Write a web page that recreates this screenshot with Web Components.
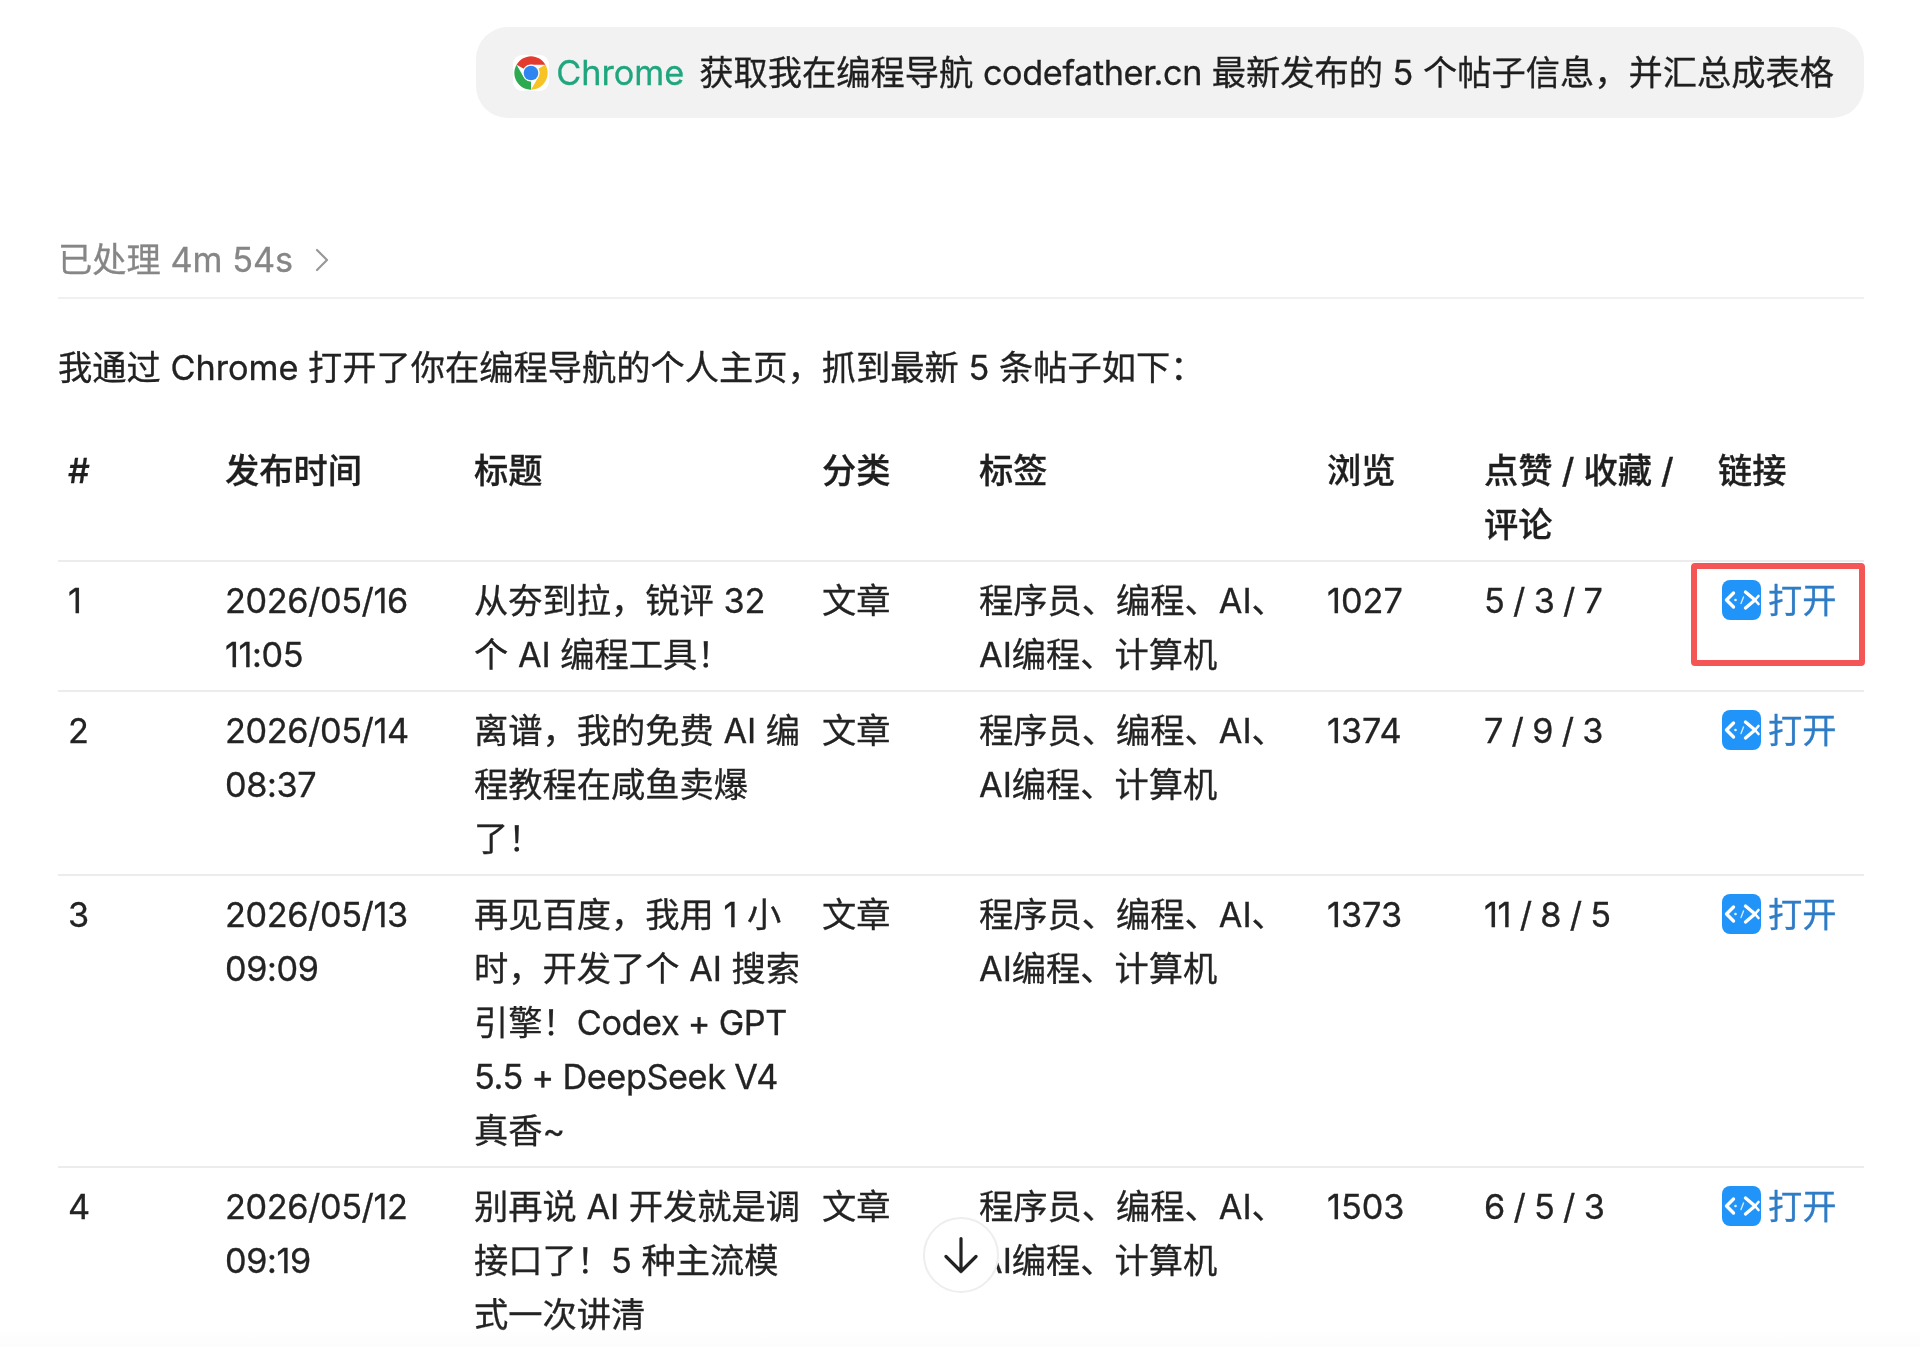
<!DOCTYPE html>
<html lang="zh-CN">
<head>
<meta charset="utf-8">
<title>Chat</title>
<style>
html,body{margin:0;padding:0;background:#fff}
body{font-family:Inter,"Noto Sans CJK SC",sans-serif;font-size:34.25px;line-height:54px;color:#232323;-webkit-text-stroke:.3px currentColor}
</style>
</head>
<body>
<chat-page>
  <user-bubble><app-logo slot="app-logo"></app-logo><span slot="app">Chrome</span>获取我在编程导航 <latin-run>codefather.cn</latin-run> 最新发布的 5 个帖子信息，并汇总成表格</user-bubble>
  <work-status>已处理 4m 54s</work-status>
  <intro-text>我通过 Chrome 打开了你在编程导航的个人主页，抓到最新 5 条帖子如下：</intro-text>
  <post-table>
    <post-row head>
      <post-cell>#</post-cell><post-cell>发布时间</post-cell><post-cell>标题</post-cell><post-cell>分类</post-cell><post-cell>标签</post-cell><post-cell>浏览</post-cell><post-cell>点赞 / 收藏 /<br>评论</post-cell><post-cell>链接</post-cell>
    </post-row>
    <post-row>
      <post-cell>1</post-cell><post-cell><latin-run>2026/05/16<br>11:05</latin-run></post-cell><post-cell>从夯到拉，锐评 32<br>个 AI 编程工具！</post-cell><post-cell>文章</post-cell><post-cell>程序员、编程、AI、<br>AI编程、计算机</post-cell><post-cell>1027</post-cell><post-cell><latin-run>5 / 3 / 7</latin-run></post-cell><post-cell><site-link></site-link><focus-ring></focus-ring></post-cell>
    </post-row>
    <post-row>
      <post-cell>2</post-cell><post-cell><latin-run>2026/05/14<br>08:37</latin-run></post-cell><post-cell>离谱，我的免费 AI 编<br>程教程在咸鱼卖爆<br>了！</post-cell><post-cell>文章</post-cell><post-cell>程序员、编程、AI、<br>AI编程、计算机</post-cell><post-cell>1374</post-cell><post-cell><latin-run>7 / 9 / 3</latin-run></post-cell><post-cell><site-link></site-link></post-cell>
    </post-row>
    <post-row>
      <post-cell>3</post-cell><post-cell><latin-run>2026/05/13<br>09:09</latin-run></post-cell><post-cell>再见百度，我用 1 小<br>时，开发了个 AI 搜索<br>引擎！<latin-run>Codex + GPT</latin-run><br><latin-run>5.5 + DeepSeek V4</latin-run><br>真香~</post-cell><post-cell>文章</post-cell><post-cell>程序员、编程、AI、<br>AI编程、计算机</post-cell><post-cell>1373</post-cell><post-cell><latin-run>11 / 8 / 5</latin-run></post-cell><post-cell><site-link></site-link></post-cell>
    </post-row>
    <post-row>
      <post-cell>4</post-cell><post-cell><latin-run>2026/05/12<br>09:19</latin-run></post-cell><post-cell>别再说 AI 开发就是调<br>接口了！5 种主流模<br>式一次讲清</post-cell><post-cell>文章</post-cell><post-cell>程序员、编程、AI、<br>AI编程、计算机</post-cell><post-cell>1503</post-cell><post-cell><latin-run>6 / 5 / 3</latin-run></post-cell><post-cell><site-link></site-link></post-cell>
    </post-row>
  </post-table>
  <scroll-down slot="overlay"></scroll-down>
</chat-page>
<script>
function def(name, html){
  customElements.define(name, class extends HTMLElement{
    constructor(){super();this.attachShadow({mode:'open'}).innerHTML=html;}
  });
}
def('chat-page',`<style>
:host{display:block;position:relative;height:1347px;overflow:hidden;box-sizing:border-box;padding:27px 56px 0 58px;background:#fff;filter:blur(.35px)}
.fade{position:absolute;left:0;right:0;bottom:0;height:20px;background:linear-gradient(rgba(252,252,252,0),#fcfcfc)}
</style><slot></slot><div class="fade"></div><slot name="overlay"></slot>`);
def('latin-run',`<style>:host{display:inline;letter-spacing:-.4px;word-spacing:-.6px}</style><slot></slot>`);
def('user-bubble',`<style>
:host{display:flex;align-items:center;width:max-content;margin-left:auto;box-sizing:border-box;height:91px;padding:0 30px 0 37px;border-radius:32px;background:#f2f2f2;color:#1f1f1f;white-space:pre}
.app{color:#1fa67e;margin:0 15px 0 7px}
.rest{display:block}
</style><slot name="app-logo"></slot><span class="app"><slot name="app"></slot></span><span class="rest"><slot></slot></span>`);
def('app-logo',`<style>
:host{display:block;width:36px;height:36px;flex:none}
svg{display:block;width:36px;height:36px}
</style><svg viewBox="0 0 36 36" aria-hidden="true"><rect width="36" height="36" rx="9" fill="#fff"/>
<g transform="translate(-2 -2) scale(.833)">
<path fill="#e33b2e" d="M6.68 14A20 20 0 0 1 41.32 14H24A10 10 0 0 0 15.34 19Z"/>
<path fill="#f7c325" transform="rotate(120 24 24)" d="M6.68 14A20 20 0 0 1 41.32 14H24A10 10 0 0 0 15.34 19Z"/>
<path fill="#2da94f" transform="rotate(240 24 24)" d="M6.68 14A20 20 0 0 1 41.32 14H24A10 10 0 0 0 15.34 19Z"/>
<circle cx="24" cy="24" r="10.2" fill="#fff"/><circle cx="24" cy="24" r="8.800" fill="#2f86f0"/></g></svg>`);
def('work-status',`<style>
:host{display:flex;align-items:center;gap:22px;box-sizing:border-box;height:72px;margin-top:108.5px;border-bottom:2px solid #f0f0f0;color:#868686;padding-bottom:3px;white-space:nowrap}
svg{display:block;width:14px;height:24px}
</style><span><slot></slot></span><svg viewBox="0 0 14 24" aria-hidden="true"><path d="M2 2l10 10L2 22" fill="none" stroke="#989898" stroke-width="2.2" stroke-linecap="round" stroke-linejoin="round"/></svg>`);
def('intro-text',`<style>
:host{display:block;margin-top:42.5px;white-space:nowrap;color:#222}
</style><slot></slot>`);
def('post-table',`<style>
:host{display:block;margin-top:37px;--cols:157px 249px 348px 157px 348px 157px 234px 156px}
</style><slot></slot>`);
def('post-row',`<style>
:host{display:grid;grid-template-columns:var(--cols);border-bottom:2px solid #ececec}
:host([head]){font-weight:500;color:#1f1f1f}
</style><slot></slot>`);
def('post-cell',`<style>
:host{display:block;position:relative;padding:11.5px 10px 8.5px;white-space:nowrap;min-width:0}
</style><slot></slot>`);
def('site-link',`<style>
:host{display:flex;align-items:center;gap:7px;height:54px;padding-left:4px;color:#2f7cc6}
svg{display:block;width:39px;height:40px;flex:none;margin-top:-2px}
</style><svg viewBox="0 0 39 40" aria-hidden="true"><rect width="39" height="40" rx="8" fill="#2094f8"/>
<g fill="none" stroke="#fff" stroke-linecap="round" stroke-linejoin="round" stroke-width="3.400"><path d="M11.500 13L4.500 20l7 7"/><path d="M23.500 12l9.500 8-9.500 8"/><path d="M33 20l3.500-4M33 20l3.500 4" stroke-width="2.600"/><path d="M21.500 17l-2.500 6.500" stroke-width="1.400" opacity=".8"/></g><circle cx="13.500" cy="20" r="1.300" fill="#fff" opacity=".9"/></svg><span>打开</span>`);
def('focus-ring',`<style>
:host{display:block;position:absolute;left:-17px;top:1px;width:174px;height:103px;box-sizing:border-box;border:6px solid #f45656;border-radius:4px;pointer-events:none}
</style>`);
def('scroll-down',`<style>
:host{display:flex;align-items:center;justify-content:center;position:absolute;left:923px;top:1217px;width:76px;height:76px;box-sizing:border-box;border:2px solid #eeeeee;border-radius:50%;background:#fff}
svg{display:block;width:34px;height:38px}
</style><svg viewBox="0 0 34 38" aria-hidden="true"><path d="M17 2.500v33M2 20.500l15 15 15-15" fill="none" stroke="#222" stroke-width="3.200" stroke-linecap="round" stroke-linejoin="round"/></svg>`);
</script>
</body>
</html>
